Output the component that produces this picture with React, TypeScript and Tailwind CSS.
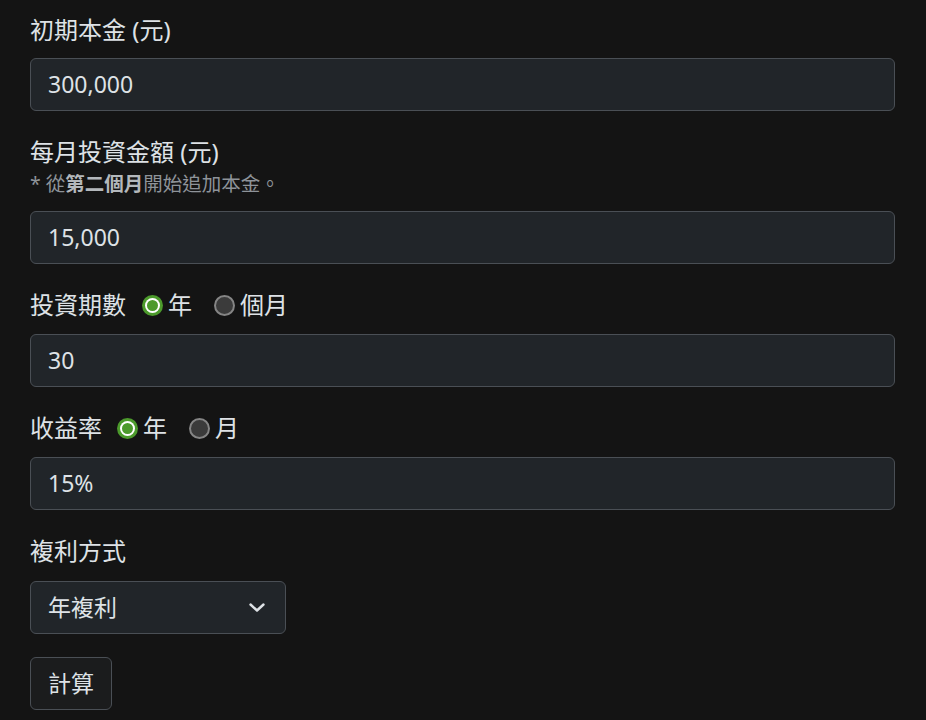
import React from "react";

const font = { fontFamily: "'Noto Sans', 'Noto Sans CJK TC', sans-serif" };

function Radio({ checked, label }: { checked: boolean; label: string }) {
  return (
    <label className="flex items-center">
      {checked ? (
        <span className="flex h-[21px] w-[21px] items-center justify-center rounded-full bg-[#4c9a2c]">
          <span className="flex h-[15px] w-[15px] items-center justify-center rounded-full bg-white">
            <span className="h-[11px] w-[11px] rounded-full bg-[#4c9a2c]" />
          </span>
        </span>
      ) : (
        <span className="h-[21px] w-[21px] rounded-full border-2 border-[#858585] bg-[#3b3b3b]" />
      )}
      <span className="ml-[5px]">{label}</span>
    </label>
  );
}

function Input({ value }: { value: string }) {
  return (
    <div className="flex h-[53px] w-[865px] items-center rounded-[6px] border border-[#4a4f55] bg-[#212529] pl-[17px] text-[23px] text-[#dee2e6]">
      {value}
    </div>
  );
}

export default function App() {
  return (
    <div
      className="min-h-[720px] w-full bg-[#141414] pl-[30px] pt-[12px] text-[#dee2e6]"
      style={font}
    >
      {/* group 1 */}
      <div className="h-[36px] text-[24px] leading-[36px]">初期本金 (元)</div>
      <div className="mt-[10px]">
        <Input value="300,000" />
      </div>

      {/* group 2 */}
      <div className="mt-[23px] h-[36px] text-[24px] leading-[36px]">每月投資金額 (元)</div>
      <div className="h-[28px] text-[19.5px] leading-[28px] text-[#8e9399]">
        * 從<span className="font-bold text-[#b4b8bc]">第二個月</span>開始追加本金。
      </div>
      <div className="mt-[13px]">
        <Input value="15,000" />
      </div>

      {/* group 3 */}
      <div className="mt-[23px] flex h-[36px] items-center text-[24px] leading-[36px]">
        <span>投資期數</span>
        <span className="ml-[16px] flex items-center">
          <Radio checked label="年" />
          <span className="ml-[22px]">
            <Radio checked={false} label="個月" />
          </span>
        </span>
      </div>
      <div className="mt-[11px]">
        <Input value="30" />
      </div>

      {/* group 4 */}
      <div className="mt-[23px] flex h-[36px] items-center text-[24px] leading-[36px]">
        <span>收益率</span>
        <span className="ml-[15px] flex items-center">
          <Radio checked label="年" />
          <span className="ml-[22px]">
            <Radio checked={false} label="月" />
          </span>
        </span>
      </div>
      <div className="mt-[11px]">
        <Input value="15%" />
      </div>

      {/* group 5 */}
      <div className="mt-[23px] h-[36px] text-[24px] leading-[36px]">複利方式</div>
      <div className="mt-[12px] flex h-[53px] w-[256px] items-center justify-between rounded-[6px] border border-[#4a4f55] bg-[#212529] pl-[17px] pr-[20px] text-[23px] text-[#dee2e6]">
        <span>年複利</span>
        <svg width="16" height="9" viewBox="0 0 16 9" fill="none">
          <path d="M1.5 1.5 L8 7.5 L14.5 1.5" stroke="#dee2e6" strokeWidth="2.4" strokeLinecap="round" strokeLinejoin="round" />
        </svg>
      </div>

      <button className="mt-[23px] flex h-[53px] w-[82px] items-center justify-center rounded-[6px] border border-[#4a4f55] bg-[#1b1c1d] text-[23px] text-[#dee2e6]">
        計算
      </button>
    </div>
  );
}
